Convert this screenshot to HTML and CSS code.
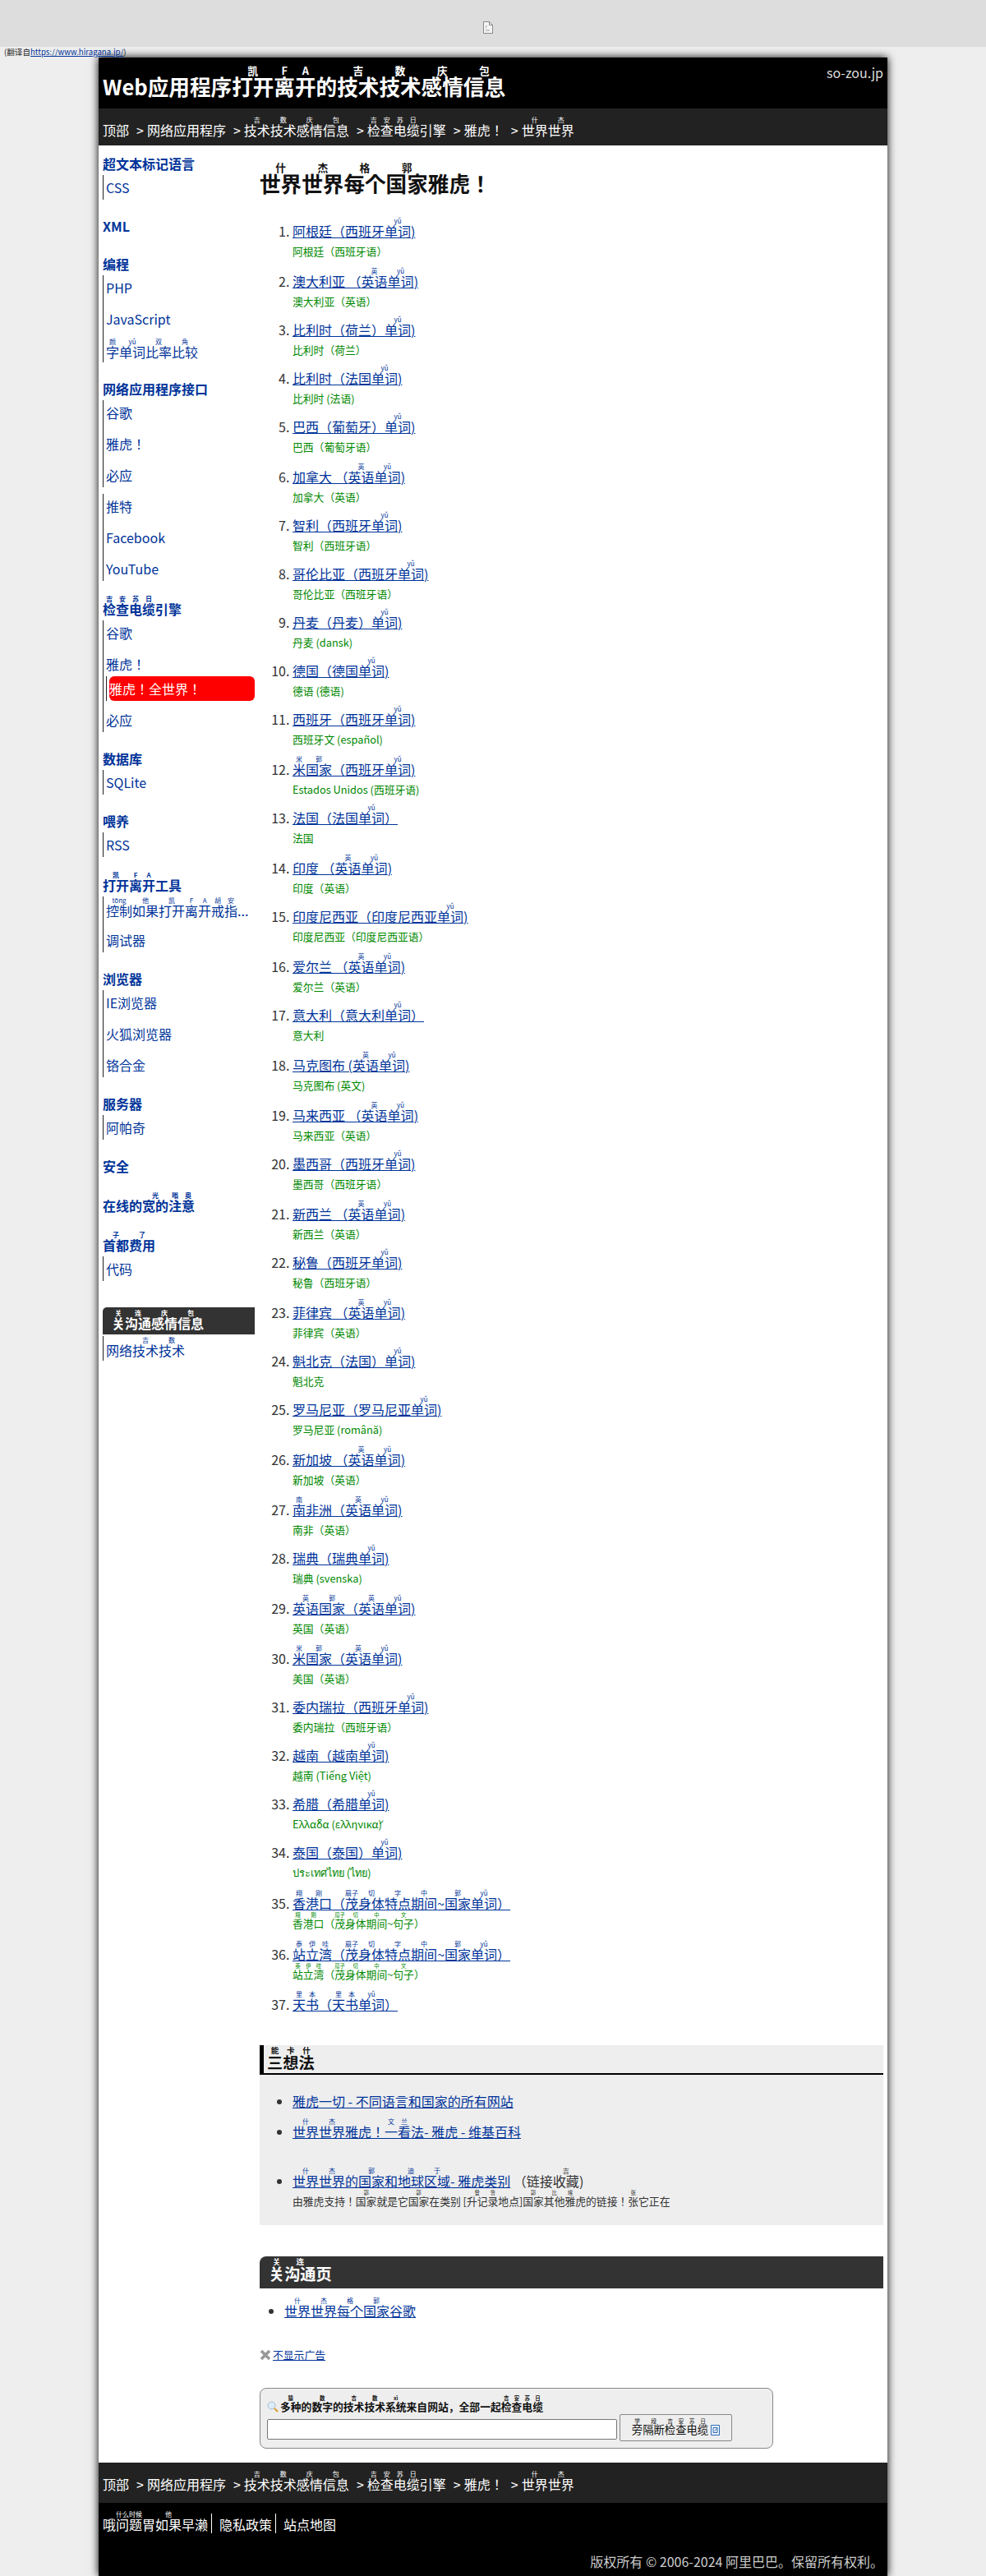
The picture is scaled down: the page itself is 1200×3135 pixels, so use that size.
FILE: index.html
```html
<!DOCTYPE html>
<html lang="ja">
<head>
<meta charset="utf-8">
<title>世界世界每个国家雅虎！</title>
<link rel="stylesheet" href="styles.css">
</head>
<body>
<div class="topbar">
<svg class="broken" width="12" height="15" viewBox="0 0 12 15"><path d="M.5.5h7l4 4v10h-11z" fill="#f4f4f4" stroke="#888"/><path d="M7.5.5v4h4" fill="none" stroke="#888"/><path d="M3 6h2M3 8h1M3 11h5" stroke="#999"/></svg>
</div>
<p class="source">(翻译自<a href="#">https://www.hiragana.jp/</a>)</p>
<div class="wrapper">
<header class="masthead">
<h2 class="sitetitle">Web应用程序<ruby>打开<rt>凯</rt></ruby><ruby>离<rt>F</rt></ruby><ruby>开<rt>A</rt></ruby>的<ruby>技术<rt>吉</rt></ruby><ruby>技术<rt>数</rt></ruby><ruby>感情<rt>庆</rt></ruby><ruby>信息<rt>包</rt></ruby></h2>
<span class="domain">so-zou.jp</span>
</header>
<nav class="crumbs top">
<a>顶部</a><i>&gt;</i><a>网络应用程序</a><i>&gt;</i><a><ruby>技术<rt>吉</rt></ruby><ruby>技术<rt>数</rt></ruby><ruby>感情<rt>庆</rt></ruby><ruby>信息<rt>包</rt></ruby></a><i>&gt;</i><a><ruby>检<rt>吉</rt></ruby><ruby>查<rt>安</rt></ruby><ruby>电<rt>苏</rt></ruby><ruby>缆<rt>日</rt></ruby>引擎</a><i>&gt;</i><a>雅虎！</a><i>&gt;</i><a><ruby>世界<rt>什</rt></ruby><ruby>世界<rt>杰</rt></ruby></a>
</nav>
<div class="content">
<aside class="side">
<h3>超文本标记语言</h3>
<ul><li><a>CSS</a></li></ul>
<h3>XML</h3>
<h3>编程</h3>
<ul><li><a>PHP</a></li><li><a>JavaScript</a></li><li class="r"><a><ruby>字<rt>颜</rt></ruby><ruby>单词<rt class="py">yǔ</rt></ruby><ruby>比率<rt>双</rt></ruby><ruby>比较<rt>角</rt></ruby></a></li></ul>
<h3>网络应用程序接口</h3>
<ul class="join"><li><a>谷歌</a></li><li><a>雅虎！</a></li><li><a>必应</a></li></ul>
<ul><li><a>推特</a></li><li><a>Facebook</a></li><li><a>YouTube</a></li></ul>
<h3 class="r"><ruby>检<rt>吉</rt></ruby><ruby>查<rt>安</rt></ruby><ruby>电<rt>苏</rt></ruby><ruby>缆<rt>日</rt></ruby>引擎</h3>
<ul><li><a>谷歌</a></li><li class="hasnest"><a>雅虎！</a><ul class="nest"><li class="hot"><a>雅虎！全世界！</a></li></ul></li><li><a>必应</a></li></ul>
<h3>数据库</h3>
<ul><li><a>SQLite</a></li></ul>
<h3>喂养</h3>
<ul><li><a>RSS</a></li></ul>
<h3 class="r"><ruby>打开<rt>凯</rt></ruby><ruby>离<rt>F</rt></ruby><ruby>开<rt>A</rt></ruby>工具</h3>
<ul><li class="r"><a><ruby>控制<rt>tōng</rt></ruby><ruby>如果<rt>他</rt></ruby><ruby>打开<rt>凯</rt></ruby><ruby>离<rt>F</rt></ruby><ruby>开<rt>A</rt></ruby><ruby>戒<rt>胡</rt></ruby><ruby>指<rt>安</rt></ruby>...</a></li><li><a>调试器</a></li></ul>
<h3>浏览器</h3>
<ul><li><a>IE浏览器</a></li><li><a>火狐浏览器</a></li><li><a>铬合金</a></li></ul>
<h3>服务器</h3>
<ul><li><a>阿帕奇</a></li></ul>
<h3>安全</h3>
<h3 class="r">在线的<ruby>宽的<rt>光</rt></ruby><ruby>注<rt>嗡</rt></ruby><ruby>意<rt>奥</rt></ruby></h3>
<h3 class="r"><ruby>首都<rt>子</rt></ruby><ruby>费用<rt>了</rt></ruby></h3>
<ul><li><a>代码</a></li></ul>
<h3 class="dark"><ruby>关<rt>关</rt></ruby><ruby>沟通<rt>连</rt></ruby><ruby>感情<rt>庆</rt></ruby><ruby>信息<rt>包</rt></ruby></h3>
<ul><li class="r"><a>网络<ruby>技术<rt>吉</rt></ruby><ruby>技术<rt>数</rt></ruby></a></li></ul>
</aside>
<main class="main">
<h1><ruby>世界<rt>什</rt></ruby><ruby>世界<rt>杰</rt></ruby><ruby>每个<rt>格</rt></ruby><ruby>国家<rt>郭</rt></ruby>雅虎！</h1>
<ol class="countries">
<li><a>阿根廷（西班牙<ruby>单词<rt class="py">yǔ</rt></ruby>)</a><p>阿根廷（西班牙语）</p></li>
<li class="t"><a>澳大利亚 （<ruby>英语<rt>英</rt></ruby><ruby>单词<rt class="py">yǔ</rt></ruby>)</a><p>澳大利亚（英语）</p></li>
<li><a>比利时（荷兰）<ruby>单词<rt class="py">yǔ</rt></ruby>)</a><p>比利时（荷兰）</p></li>
<li><a>比利时（法国<ruby>单词<rt class="py">yǔ</rt></ruby>)</a><p>比利时 (法语)</p></li>
<li><a>巴西（葡萄牙）<ruby>单词<rt class="py">yǔ</rt></ruby>)</a><p>巴西（葡萄牙语）</p></li>
<li class="t"><a>加拿大 （<ruby>英语<rt>英</rt></ruby><ruby>单词<rt class="py">yǔ</rt></ruby>)</a><p>加拿大（英语）</p></li>
<li><a>智利（西班牙<ruby>单词<rt class="py">yǔ</rt></ruby>)</a><p>智利（西班牙语）</p></li>
<li><a>哥伦比亚（西班牙<ruby>单词<rt class="py">yǔ</rt></ruby>)</a><p>哥伦比亚（西班牙语）</p></li>
<li><a>丹麦（丹麦）<ruby>单词<rt class="py">yǔ</rt></ruby>)</a><p>丹麦 (dansk)</p></li>
<li><a>德国（德国<ruby>单词<rt class="py">yǔ</rt></ruby>)</a><p>德语 (德语)</p></li>
<li><a>西班牙（西班牙<ruby>单词<rt class="py">yǔ</rt></ruby>)</a><p>西班牙文 (español)</p></li>
<li class="t"><a><ruby>米<rt>米</rt></ruby><ruby>国家<rt>郭</rt></ruby>（西班牙<ruby>单词<rt class="py">yǔ</rt></ruby>)</a><p>Estados Unidos (西班牙语)</p></li>
<li><a>法国（法国<ruby>单词<rt class="py">yǔ</rt></ruby>）</a><p>法国</p></li>
<li class="t"><a>印度 （<ruby>英语<rt>英</rt></ruby><ruby>单词<rt class="py">yǔ</rt></ruby>)</a><p>印度（英语）</p></li>
<li><a>印度尼西亚（印度尼西亚<ruby>单词<rt class="py">yǔ</rt></ruby>)</a><p>印度尼西亚（印度尼西亚语）</p></li>
<li class="t"><a>爱尔兰 （<ruby>英语<rt>英</rt></ruby><ruby>单词<rt class="py">yǔ</rt></ruby>)</a><p>爱尔兰（英语）</p></li>
<li><a>意大利（意大利<ruby>单词<rt class="py">yǔ</rt></ruby>）</a><p>意大利</p></li>
<li class="t"><a>马克图布 (<ruby>英语<rt>英</rt></ruby><ruby>单词<rt class="py">yǔ</rt></ruby>)</a><p>马克图布 (英文)</p></li>
<li class="t"><a>马来西亚 （<ruby>英语<rt>英</rt></ruby><ruby>单词<rt class="py">yǔ</rt></ruby>)</a><p>马来西亚（英语）</p></li>
<li><a>墨西哥（西班牙<ruby>单词<rt class="py">yǔ</rt></ruby>)</a><p>墨西哥（西班牙语）</p></li>
<li class="t"><a>新西兰 （<ruby>英语<rt>英</rt></ruby><ruby>单词<rt class="py">yǔ</rt></ruby>)</a><p>新西兰（英语）</p></li>
<li><a>秘鲁（西班牙<ruby>单词<rt class="py">yǔ</rt></ruby>)</a><p>秘鲁（西班牙语）</p></li>
<li class="t"><a>菲律宾 （<ruby>英语<rt>英</rt></ruby><ruby>单词<rt class="py">yǔ</rt></ruby>)</a><p>菲律宾（英语）</p></li>
<li><a>魁北克（法国）<ruby>单词<rt class="py">yǔ</rt></ruby>)</a><p>魁北克</p></li>
<li><a>罗马尼亚（罗马尼亚<ruby>单词<rt class="py">yǔ</rt></ruby>)</a><p>罗马尼亚 (română)</p></li>
<li class="t"><a>新加坡 （<ruby>英语<rt>英</rt></ruby><ruby>单词<rt class="py">yǔ</rt></ruby>)</a><p>新加坡（英语）</p></li>
<li class="t"><a><ruby>南<rt>南</rt></ruby>非洲（<ruby>英语<rt>英</rt></ruby><ruby>单词<rt class="py">yǔ</rt></ruby>)</a><p>南非（英语）</p></li>
<li><a>瑞典（瑞典<ruby>单词<rt class="py">yǔ</rt></ruby>)</a><p>瑞典 (svenska)</p></li>
<li class="t"><a><ruby>英语<rt>英</rt></ruby><ruby>国家<rt>郭</rt></ruby>（<ruby>英语<rt>英</rt></ruby><ruby>单词<rt class="py">yǔ</rt></ruby>)</a><p>英国（英语）</p></li>
<li class="t"><a><ruby>米<rt>米</rt></ruby><ruby>国家<rt>郭</rt></ruby>（<ruby>英语<rt>英</rt></ruby><ruby>单词<rt class="py">yǔ</rt></ruby>)</a><p>美国（英语）</p></li>
<li><a>委内瑞拉（西班牙<ruby>单词<rt class="py">yǔ</rt></ruby>)</a><p>委内瑞拉（西班牙语）</p></li>
<li><a>越南（越南<ruby>单词<rt class="py">yǔ</rt></ruby>)</a><p>越南 (Tiếng Việt)</p></li>
<li><a>希腊（希腊<ruby>单词<rt class="py">yǔ</rt></ruby>)</a><p>Ελλάδα (ελληνικά)</p></li>
<li><a>泰国（泰国）<ruby>单词<rt class="py">yǔ</rt></ruby>)</a><p>ประเทศไทย (ไทย)</p></li>
<li class="t3"><a><ruby>香<rt>翔</rt></ruby><ruby>港口<rt>刚</rt></ruby>（<ruby>茂<rt>扇子</rt></ruby><ruby>身体<rt>切</rt></ruby><ruby>特点<rt>字</rt></ruby><ruby>期间<rt>中</rt></ruby>~<ruby>国家<rt>郭</rt></ruby><ruby>单词<rt class="py">yǔ</rt></ruby>）</a><p class="rp"><ruby>香<rt>翔</rt></ruby><ruby>港口<rt>刚</rt></ruby>（<ruby>茂<rt>扇子</rt></ruby><ruby>身体<rt>切</rt></ruby><ruby>期间<rt>中</rt></ruby>~<ruby>句子<rt>文</rt></ruby>）</p></li>
<li class="t3"><a><ruby>站<rt>泰</rt></ruby><ruby>立<rt>伊</rt></ruby><ruby>湾<rt>哇</rt></ruby>（<ruby>茂<rt>扇子</rt></ruby><ruby>身体<rt>切</rt></ruby><ruby>特点<rt>字</rt></ruby><ruby>期间<rt>中</rt></ruby>~<ruby>国家<rt>郭</rt></ruby><ruby>单词<rt class="py">yǔ</rt></ruby>）</a><p class="rp"><ruby>站<rt>泰</rt></ruby><ruby>立<rt>伊</rt></ruby><ruby>湾<rt>哇</rt></ruby>（<ruby>茂<rt>扇子</rt></ruby><ruby>身体<rt>切</rt></ruby><ruby>期间<rt>中</rt></ruby>~<ruby>句子<rt>文</rt></ruby>）</p></li>
<li class="t"><a><ruby>天<rt>里</rt></ruby><ruby>书<rt>本</rt></ruby>（<ruby>天<rt>里</rt></ruby><ruby>书<rt>本</rt></ruby><ruby>单词<rt class="py">yǔ</rt></ruby>）</a></li>
</ol>
<section class="ideas">
<h2><ruby>三<rt>能</rt></ruby><ruby>想<rt>卡</rt></ruby><ruby>法<rt>什</rt></ruby></h2>
<ul>
<li><a>雅虎一切 - 不同语言和国家的所有网站</a></li>
<li><a><ruby>世界<rt>什</rt></ruby><ruby>世界<rt>杰</rt></ruby>雅虎！<ruby>一<rt>文</rt></ruby><ruby>看<rt>兰</rt></ruby>法- 雅虎 - 维基百科</a></li>
<li class="third"><a><ruby>世界<rt>什</rt></ruby><ruby>世界<rt>杰</rt></ruby>的<ruby>国家<rt>郭</rt></ruby>和<ruby>地球<rt>迪</rt></ruby><ruby>区域<rt>于</rt></ruby>- 雅虎类别</a> <span class="note">（链接<ruby>收藏<rt>吉</rt></ruby>)</span>
<p>由雅虎支持！<ruby>国家<rt>郭</rt></ruby>就是它<ruby>国家<rt>郭</rt></ruby>在类别 [<ruby>升记<rt>登</rt></ruby><ruby>录<rt>鲁</rt></ruby>地点]<ruby>国家<rt>郭</rt></ruby><ruby>其他<rt>比</rt></ruby><ruby>雅<rt>埃</rt></ruby>虎的链接！<ruby>张<rt>张</rt></ruby>它正在</p></li>
</ul>
</section>
<section class="related">
<h2><ruby>关<rt>关</rt></ruby><ruby>沟通<rt>连</rt></ruby>页</h2>
<ul><li><a><ruby>世界<rt>什</rt></ruby><ruby>世界<rt>杰</rt></ruby><ruby>每个<rt>格</rt></ruby><ruby>国家<rt>郭</rt></ruby>谷歌</a></li></ul>
</section>
<p class="noad"><svg width="14" height="14" viewBox="0 0 14 14"><path d="M2 2l10 10M12 2L2 12" stroke="#999" stroke-width="3.6"/></svg><a>不显示广告</a></p>
<form class="searchbox">
<p class="searchtitle"><svg width="14" height="14" viewBox="0 0 14 14"><circle cx="5.5" cy="5.5" r="4.5" fill="#dcecfa" stroke="#a9bccb"/><path d="M9 9l4 4" stroke="#d9a441" stroke-width="2.4"/></svg><span><ruby>多种<rt>猿</rt></ruby>的<ruby>数字<rt>数</rt></ruby>的<ruby>技术<rt>吉</rt></ruby><ruby>技术<rt>数</rt></ruby><ruby>系统<rt>xì</rt></ruby>来自网站，全部一起<ruby>检<rt>吉</rt></ruby><ruby>查<rt>安</rt></ruby><ruby>电<rt>苏</rt></ruby><ruby>缆<rt>日</rt></ruby></span></p>
<div class="searchrow">
<input class="field" type="text">
<button class="go" type="button"><span><ruby>旁<rt>学</rt></ruby><ruby>隔断<rt>段</rt></ruby><ruby>检<rt>吉</rt></ruby><ruby>查<rt>安</rt></ruby><ruby>电<rt>苏</rt></ruby><ruby>缆<rt>日</rt></ruby></span><svg width="11" height="13" viewBox="0 0 11 13"><path d="M.5.5h10v12H.5z" fill="#eef3fb" stroke="#2f6db5"/><path d="M3 3.5h5v6H3z" fill="none" stroke="#2f6db5"/><path d="M4.5 8L8 4" stroke="#2f6db5"/></svg></button>
</div>
</form>
</main>
</div>
<nav class="crumbs bottom">
<a>顶部</a><i>&gt;</i><a>网络应用程序</a><i>&gt;</i><a><ruby>技术<rt>吉</rt></ruby><ruby>技术<rt>数</rt></ruby><ruby>感情<rt>庆</rt></ruby><ruby>信息<rt>包</rt></ruby></a><i>&gt;</i><a><ruby>检<rt>吉</rt></ruby><ruby>查<rt>安</rt></ruby><ruby>电<rt>苏</rt></ruby><ruby>缆<rt>日</rt></ruby>引擎</a><i>&gt;</i><a>雅虎！</a><i>&gt;</i><a><ruby>世界<rt>什</rt></ruby><ruby>世界<rt>杰</rt></ruby></a>
</nav>
<footer class="foot">
<ul class="footlinks"><li><a>哦<ruby>问题<rt>什么时候</rt></ruby>胃<ruby>如果<rt>他</rt></ruby>早濑</a></li><li><a>隐私政策</a></li><li><a>站点地图</a></li></ul>
<p class="copy">版权所有 © 2006-2024 阿里巴巴。保留所有权利。</p>
</footer>
</div>
</body>
</html>
```
FILE: styles.css
```css
* { box-sizing: border-box; }
html, body { margin: 0; padding: 0; }
body {
  background: #eee;
  color: #333;
  font-family: "Noto Sans CJK JP", "Noto Sans", sans-serif;
  font-size: 16px;
}
p, h1, h2, h3, ul, ol { margin: 0; padding: 0; }
a { color: #039; }
ruby { line-height: 18px; }
rt { font-size: 50%; line-height: 8px; }
rt.py { line-height: 2px; }

.topbar {
  height: 57px;
  background: #ddd;
  display: flex;
  justify-content: center;
  padding-top: 26px;
  padding-right: 12px;
}
.broken { display: block; }
.source {
  height: 13px;
  font-size: 9.6px;
  line-height: 13px;
  padding-left: 5px;
  position: relative;
  z-index: 1;
  color: #222;
}
.source a { text-decoration: underline; }

.wrapper {
  width: 960px;
  margin: 0 auto;
  background: #fff;
  box-shadow: 0 0 10px #000;
  position: relative;
}
.masthead {
  height: 62px;
  background: #000;
  color: #fff;
  padding: 0 5px;
  display: flex;
  justify-content: space-between;
}
.sitetitle { font-size: 25.6px; font-weight: 700; line-height: 52px; padding-top: 9px; }
.sitetitle ruby { line-height: 26px; }
.sitetitle rt { line-height: 13px; }
.domain { color: #ddd; line-height: 24px; padding-top: 6px; }

.crumbs { background: #222; color: #fff; padding: 9px 5px 0; line-height: 34px; }
.crumbs.top { height: 45px; }
.crumbs.bottom { height: 49px; }
.crumbs a { color: #fff; }
.crumbs i { font-style: normal; margin: 0 4px 0 9px; }

.content { display: flex; gap: 6px; padding: 0 5px; }
.side { width: 185px; flex: none; padding-top: 10px; }
.side h3 { font-size: 16px; font-weight: 700; color: #039; line-height: 24px; margin: 0 0 2px; }
.side ul + h3 { margin-top: 20px; }
.side h3 + h3 { margin-top: 22px; }
.side h3.r { line-height: 34px; height: 29px; }
.side ul + h3.r { margin-top: 17px; }
.side h3 + h3.r { margin-top: 19px; }
.side ul { list-style: none; border-left: 1px solid #222; padding-left: 3px; display: flex; flex-direction: column; gap: 8px; }
.side ul.join + ul { margin-top: 8px; }
.side li { line-height: 30px; height: 30px; white-space: nowrap; }
.side li.r { line-height: 34px; }
.side li.hasnest { height: auto; }
.side .hot { height: 30px; background: #f00; border-radius: 6px; }
.side .hot a { color: #fff; }
.side h3.dark {
  background: #333;
  color: #fff;
  margin-top: 32px;
  height: 33px;
  padding-left: 11px;
  border-radius: 5px 0 0 0;
  line-height: 38px;
}

.main { width: 759px; flex: none; padding: 20px 0 17px; }
h1 { font-size: 25.6px; font-weight: 700; color: #111; line-height: 52px; }
h1 ruby { line-height: 26px; }
h1 rt { line-height: 13px; }
.countries { padding-left: 40px; margin-top: 15px; }
.countries li { height: 59px; line-height: 34px; }
.countries li.t { height: 61px; padding-top: 2px; }
.countries li.t3 { height: 62px; padding-top: 3px; }
.countries li a { display: block; text-decoration: underline; }
.countries p { color: #080; font-size: 12.8px; line-height: 20px; margin-top: -2px; }
.countries p.rp { line-height: 34px; margin-top: -9px; }
.countries p ruby { line-height: 13px; }
.countries p rt { line-height: 7px; }

.ideas { background: #eee; margin-top: 8px; padding-bottom: 12px; }
.ideas h2, .related h2 { font-weight: 700; font-size: 19.2px; line-height: 42px; }
.ideas h2 ruby, .related h2 ruby { line-height: 18px; }
.ideas h2 rt, .related h2 rt { line-height: 12px; }
.ideas h2 { color: #111; height: 36px; border-left: 5px solid #000; border-bottom: 2px solid #000; padding-left: 4px; }
.ideas ul { padding: 15px 0 0 40px; }
.ideas li { line-height: 34px; height: 37px; }
.ideas li.third { margin-top: 23px; height: auto; }
.ideas a { text-decoration: underline; }
.ideas p { font-size: 12.8px; line-height: 34px; margin-top: -9px; }
.ideas p ruby { line-height: 13px; }
.ideas p rt { line-height: 7px; }

.related { margin-top: 38px; }
.related h2 { background: #333; color: #fff; height: 39px; padding-left: 11px; border-radius: 8px 0 0 0; }
.related ul { padding: 10px 0 0 30px; }
.related li { line-height: 34px; }
.related a { text-decoration: underline; }

.noad { margin-top: 27px; font-size: 12.8px; line-height: 20px; display: flex; align-items: center; gap: 2px; }
.noad a { text-decoration: underline; }

.searchbox { margin-top: 30px; width: 625px; height: 74px; background: #eee; border: 1px solid #888; border-radius: 8px; padding: 8px 8px 0; }
.searchtitle { font-size: 12.8px; font-weight: 700; color: #111; line-height: 28px; display: flex; align-items: center; gap: 2px; }
.searchtitle ruby, .go ruby { line-height: 13px; }
.searchtitle rt, .go rt { line-height: 7px; }
.searchrow { display: flex; align-items: flex-start; gap: 3px; margin-top: -5px; }
.field { width: 426px; height: 25px; margin-top: 6px; border: 1px solid #777; border-radius: 2px; background: #fff; padding: 0; }
.go { width: 137px; height: 33px; border: 1px solid #888; border-radius: 2px; background: #eee; font: 13.33px/28px "Noto Sans CJK JP", sans-serif; color: #111; padding: 5px 0 0; display: flex; align-items: center; justify-content: center; gap: 3px; }

.foot { background: #000; color: #ccc; height: 89px; padding: 0 5px; }
.footlinks { list-style: none; display: flex; padding-top: 13px; height: 37px; }
.footlinks li { height: 24px; line-height: 34px; padding-right: 4px; margin-right: 9px; border-right: 1px solid #fff; }
.footlinks li:last-child { border: 0; }
.footlinks a { display: block; margin-top: -4px; color: #fff; }
.copy { text-align: right; margin-top: 22px; line-height: 24px; }
```
